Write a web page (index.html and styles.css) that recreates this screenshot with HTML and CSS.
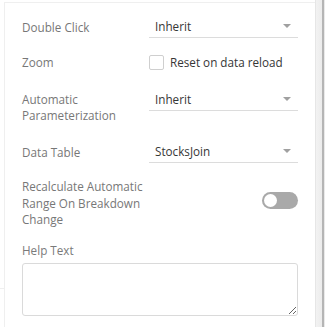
FILE: index.html
```html
<!DOCTYPE html>
<html>
<head>
<meta charset="utf-8">
<link rel="stylesheet" href="styles.css">
</head>
<body>
<div class="frame">
  <div class="panel">
    <div class="row row-dbl">
      <div class="label">Double Click</div>
      <div class="select"><span>Inherit</span><i class="caret"></i></div>
    </div>
    <div class="row row-zoom">
      <div class="label">Zoom</div>
      <label class="check"><span class="box"></span><span class="check-text">Reset on data reload</span></label>
    </div>
    <div class="row row-auto">
      <div class="label label-top">Automatic<br>Parameterization</div>
      <div class="select"><span>Inherit</span><i class="caret"></i></div>
    </div>
    <div class="row row-table">
      <div class="label">Data Table</div>
      <div class="select"><span>StocksJoin</span><i class="caret"></i></div>
    </div>
    <div class="row row-recalc">
      <div class="label label-multi">Recalculate Automatic Range On Breakdown Change</div>
      <div class="toggle-cell"><span class="toggle"><span class="knob"></span></span></div>
    </div>
    <div class="help-label">Help Text</div>
    <textarea class="help-area"></textarea>
  </div>
  <div class="scrollbar"><div class="scroll-line"></div></div>
  <div class="side-mark"></div>
</div>
</body>
</html>
```

FILE: styles.css
```css
html, body {
  margin: 0;
  padding: 0;
  background: #fff;
  width: 325px;
  height: 327px;
  overflow: hidden;
}
body {
  font-family: "Open Sans", "Noto Sans", sans-serif;
  font-size: 11.7px;
  color: #7a7a7a;
}
.frame {
  position: relative;
  display: flex;
  height: 327px;
}
.panel {
  margin-left: 4px;
  margin-top: 2px;
  width: 311px;
  border-left: 1px solid #efefef;
  border-top: 1px solid #efefef;
  box-sizing: border-box;
  padding: 0 17px 0 17px;
  display: flex;
  flex-direction: column;
}
.row {
  display: flex;
  align-items: center;
}
.label {
  width: 127px;
  flex: none;
  line-height: 16px;
  color: #777;
}
.select {
  flex: 1;
  height: 22px;
  border-bottom: 1px solid #dcdcdc;
  display: flex;
  align-items: center;
  justify-content: space-between;
  padding: 0 7px 0 6px;
  color: #363636;
}
.caret {
  width: 0;
  height: 0;
  border-left: 4px solid transparent;
  border-right: 4px solid transparent;
  border-top: 4px solid #a0a0a0;
}
.row-dbl { margin-top: 12px; }
.row-zoom { margin-top: 16px; height: 16px; }
.check {
  display: flex;
  align-items: center;
  color: #363636;
}
.box {
  width: 15px;
  height: 15px;
  border: 1px solid #cfcfcf;
  border-radius: 2px;
  margin-right: 6px;
  box-sizing: border-box;
}
.row-auto { margin-top: 18px; align-items: flex-start; }
.label-top { padding-top: 3px; }
.row-table { margin-top: 17px; }
.row-recalc { margin-top: 15px; align-items: flex-start; }
.label-multi { width: 127px; line-height: 16.5px; }
.toggle-cell {
  flex: 1;
  display: flex;
  justify-content: flex-end;
  padding-top: 14px;
  padding-right: 0;
}
.toggle {
  width: 36px;
  height: 17px;
  border-radius: 9px;
  background: #a9a9a9;
  display: flex;
  align-items: center;
  padding-left: 2px;
  box-sizing: border-box;
}
.knob {
  width: 13px;
  height: 13px;
  border-radius: 50%;
  background: #fff;
}
.help-label {
  margin-top: 14px;
  line-height: 16px;
}
.help-area {
  margin-top: 5px;
  height: 53px;
  width: 100%;
  box-sizing: border-box;
  border: 1px solid #dadada;
  border-radius: 3px;
  resize: both;
  font: inherit;
  outline: none;
}
.scrollbar {
  width: 10px;
  height: 327px;
  border-left: 1px solid #e6e6e6;
  display: flex;
  justify-content: flex-end;
  box-sizing: border-box;
  background: linear-gradient(to right, #f2f2f2 0, #e9e9e9 100%);
}
.scroll-line {
  width: 2px;
  margin-right: 1px;
  background: #b5b5b5;
}
.side-mark {
  position: absolute;
  left: 0;
  top: 288px;
  width: 5px;
  height: 1px;
  background: #efefef;
}
```
